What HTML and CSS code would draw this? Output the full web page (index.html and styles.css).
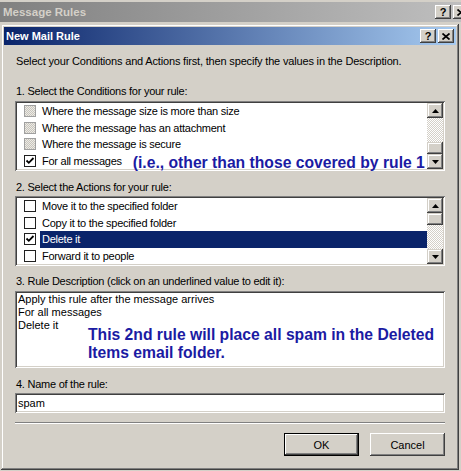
FILE: index.html
```html
<!DOCTYPE html>
<html lang="en">
<head>
  <meta charset="UTF-8">
  <meta name="viewport" content="width=device-width, initial-scale=1.0">
  <title>New Mail Rule</title>
  <link rel="stylesheet" href="styles.css">
</head>
<body>
  <!-- Fenêtre parente (inactive) -->
  <div class="parent-title">
    <span class="parent-caption">Message Rules</span>
    <div class="caption-buttons">
      <span class="cap-btn help">?</span>
      <span class="cap-btn close">
        <svg width="8" height="7" viewBox="0 0 8 7"><path d="M0.5 0.5 L7.5 6.5 M7.5 0.5 L0.5 6.5" stroke="#000" stroke-width="1.7"/></svg>
      </span>
    </div>
  </div>

  <div class="dialog">
    <div class="titlebar">
      <span class="caption">New Mail Rule</span>
      <div class="caption-buttons">
        <span class="cap-btn help">?</span>
        <span class="cap-btn close">
          <svg width="8" height="7" viewBox="0 0 8 7"><path d="M0.5 0.5 L7.5 6.5 M7.5 0.5 L0.5 6.5" stroke="#000" stroke-width="1.7"/></svg>
        </span>
      </div>
    </div>

    <div class="content">
      <p class="intro">Select your Conditions and Actions first, then specify the values in the Description.</p>

      <!-- 1. Conditions -->
      <p class="label label-first">1. Select the Conditions for your rule:</p>
      <div class="listbox">
        <ul class="items">
          <li><span class="check disabled"></span><span class="text">Where the message size is more than size</span></li>
          <li><span class="check disabled"></span><span class="text">Where the message has an attachment</span></li>
          <li><span class="check disabled"></span><span class="text">Where the message is secure</span></li>
          <li>
            <span class="check"><svg width="10" height="10" viewBox="0 0 10 10"><path d="M1.5 4.5 L3.8 6.8 L8.5 2" fill="none" stroke="#000" stroke-width="1.8"/></svg></span>
            <span class="text short">For all messages</span>
            <span class="note">(i.e., other than those covered by rule 1</span>
          </li>
        </ul>
        <div class="scrollbar">
          <span class="arrow"><svg width="7" height="4" viewBox="0 0 7 4"><path d="M0 4 L3.5 0 L7 4 Z"/></svg></span>
          <div class="track end"><span class="thumb"></span></div>
          <span class="arrow"><svg width="7" height="4" viewBox="0 0 7 4"><path d="M0 0 L3.5 4 L7 0 Z"/></svg></span>
        </div>
      </div>

      <!-- 2. Actions -->
      <p class="label label-second">2. Select the Actions for your rule:</p>
      <div class="listbox listbox-actions">
        <ul class="items">
          <li><span class="check"></span><span class="text">Move it to the specified folder</span></li>
          <li><span class="check"></span><span class="text">Copy it to the specified folder</span></li>
          <li>
            <span class="check"><svg width="10" height="10" viewBox="0 0 10 10"><path d="M1.5 4.5 L3.8 6.8 L8.5 2" fill="none" stroke="#000" stroke-width="1.8"/></svg></span>
            <span class="text selected">Delete it</span>
          </li>
          <li><span class="check"></span><span class="text">Forward it to people</span></li>
        </ul>
        <div class="scrollbar">
          <span class="arrow"><svg width="7" height="4" viewBox="0 0 7 4"><path d="M0 4 L3.5 0 L7 4 Z"/></svg></span>
          <div class="track"><span class="thumb"></span></div>
          <span class="arrow"><svg width="7" height="4" viewBox="0 0 7 4"><path d="M0 0 L3.5 4 L7 0 Z"/></svg></span>
        </div>
      </div>

      <!-- 3. Description -->
      <p class="label label-third">3. Rule Description (click on an underlined value to edit it):</p>
      <div class="description">
        <div>Apply this rule after the message arrives</div>
        <div>For all messages</div>
        <div class="desc-last">
          <span class="desc-action">Delete it</span>
          <p class="note note-big">This 2nd rule will place all spam in the Deleted<br>Items email folder.</p>
        </div>
      </div>

      <!-- 4. Nom -->
      <p class="label label-fourth">4. Name of the rule:</p>
      <div class="textbox">spam</div>

      <div class="separator"></div>

      <div class="buttons">
        <button class="btn default">OK</button>
        <button class="btn">Cancel</button>
      </div>
    </div>
  </div>
</body>
</html>
```

FILE: styles.css
```css
* {
  box-sizing: border-box;
}

body {
  margin: 0;
  padding-top: 2px;
  width: 461px;
  height: 471px;
  overflow: hidden;
  background-color: #d4d0c8; /* gris Windows classique */
  font-family: "Liberation Sans", Arial, sans-serif;
  font-size: 11px;
  color: #000;
}

p {
  margin: 0;
}

/* Barres de titre */
.parent-title {
  width: 471px;
  height: 20px;
  display: flex;
  align-items: center;
  justify-content: space-between;
  padding-left: 3px;
  background: linear-gradient(to right, #808080, #c0c0c0);
}

.parent-caption {
  color: #d4d0c8;
  font-weight: bold;
  font-size: 11.5px;
}

.caption-buttons {
  display: flex;
  gap: 2px;
  margin-right: 2px;
}

.cap-btn {
  width: 16px;
  height: 14px;
  display: flex;
  align-items: center;
  justify-content: center;
  background-color: #d4d0c8;
  font-weight: bold;
  font-size: 11px;
  line-height: 1;
  box-shadow: inset -1px -1px #404040, inset 1px 1px #fff, inset -2px -2px #808080;
}

.dialog {
  margin: 2px 2px 0 1px;
  padding: 3px;
  box-shadow: inset -1px -1px #404040, inset 1px 1px #d4d0c8, inset -2px -2px #808080, inset 2px 2px #fff;
}

.titlebar {
  height: 18px;
  display: flex;
  align-items: center;
  justify-content: space-between;
  padding-left: 2px;
  background: linear-gradient(to right, #0a246a, #a6caf0);
}

.caption {
  color: #fff;
  font-weight: bold;
  font-size: 11px;
}

/* Contenu */
.content {
  padding: 10px 11px 11px 11px;
}

.intro,
.label {
  line-height: 13px;
  padding-left: 1px;
  letter-spacing: -0.25px;
}

.intro {
  letter-spacing: -0.17px;
}

.label-first {
  margin-top: 17px;
  margin-bottom: 3px;
}

.label-second {
  margin-top: 10px;
  margin-bottom: 2px;
}

.label-third {
  margin-top: 9px;
  margin-bottom: 3px;
}

.label-fourth {
  margin-top: 10px;
  margin-bottom: 2px;
}

.listbox {
  display: flex;
  height: 70px;
  padding: 2px;
  background-color: #fff;
  box-shadow: inset 1px 1px #808080, inset -1px -1px #fff, inset 2px 2px #404040, inset -2px -2px #d4d0c8;
}

.items {
  flex: 1;
  list-style: none;
  margin: 0;
  padding: 0;
  letter-spacing: -0.25px;
}

.items li {
  height: 16.5px;
  display: flex;
  align-items: center;
  white-space: nowrap;
}

.check {
  width: 12px;
  height: 12px;
  margin: 0 4px 0 7px;
  flex-shrink: 0;
  display: flex;
  align-items: center;
  justify-content: center;
  border: 1px solid #202020;
  background-color: #fff;
}

.check.disabled {
  border-color: #a0a0a0;
  background: repeating-conic-gradient(#c8c4bc 0 25%, #ecebe6 0 50%) 0 0 / 2px 2px;
}

.text {
  flex: 1;
  height: 100%;
  line-height: 16.5px;
  padding: 0 2px;
}

.text.short {
  flex: none;
}

.text.selected {
  background-color: #0a246a;
  color: #fff;
}

.note {
  color: #1b1ba3;
  font-weight: bold;
  font-size: 15.7px;
  line-height: 16px;
  letter-spacing: 0;
  margin: 4px 0 0 9px;
}

.scrollbar {
  width: 16px;
  display: flex;
  flex-direction: column;
}

.arrow {
  height: 15px;
  display: flex;
  align-items: center;
  justify-content: center;
  background-color: #d4d0c8;
  box-shadow: inset -1px -1px #404040, inset 1px 1px #d4d0c8, inset -2px -2px #808080, inset 2px 2px #fff;
}

.track {
  flex: 1;
  display: flex;
  flex-direction: column;
  background: repeating-conic-gradient(#fff 0 25%, #d4d0c8 0 50%) 0 0 / 2px 2px;
}

.track.end {
  justify-content: flex-end;
}

.thumb {
  height: 12px;
  background-color: #d4d0c8;
  box-shadow: inset -1px -1px #404040, inset 1px 1px #d4d0c8, inset -2px -2px #808080, inset 2px 2px #fff;
}

/* Description */
.description {
  height: 77px;
  padding: 0 3px;
  background-color: #fff;
  line-height: 13px;
  box-shadow: inset 1px 1px #808080, inset -1px -1px #fff, inset 2px 2px #404040, inset -2px -2px #d4d0c8;
}

.description > div:first-child {
  padding-top: 2px;
}

.desc-last {
  display: flex;
  align-items: flex-start;
}

.desc-action {
  width: 70px;
  flex-shrink: 0;
}

.note-big {
  line-height: 18px;
  margin: 7px 0 0 0;
}

.textbox {
  height: 20px;
  padding: 2px 3px;
  line-height: 16px;
  background-color: #fff;
  box-shadow: inset 1px 1px #808080, inset -1px -1px #fff, inset 2px 2px #404040, inset -2px -2px #d4d0c8;
}

.separator {
  margin-top: 9px;
  height: 2px;
  border-top: 1px solid #808080;
  border-bottom: 1px solid #fff;
}

.buttons {
  display: flex;
  justify-content: flex-end;
  gap: 11px;
  margin-top: 9px;
}

.btn {
  width: 75px;
  height: 23px;
  border: none;
  padding: 0;
  background-color: #d4d0c8;
  font-family: "Liberation Sans", Arial, sans-serif;
  font-size: 11px;
  color: #000;
  box-shadow: inset -1px -1px #404040, inset 1px 1px #fff, inset -2px -2px #808080, inset 2px 2px #d4d0c8;
}

.btn.default {
  border: 1px solid #000;
  box-shadow: inset -1px -1px #404040, inset 1px 1px #fff, inset -2px -2px #808080;
}
```
